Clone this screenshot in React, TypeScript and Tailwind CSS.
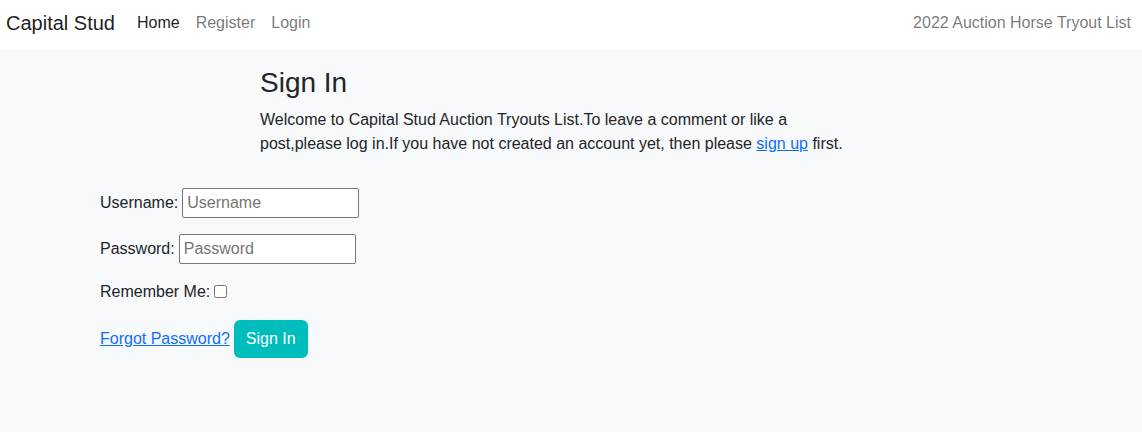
import React from "react";

const App: React.FC = () => {
    return (
        <div className="min-h-screen flex flex-col bg-[#f8f9fa] text-[#212529] font-['Liberation_Sans',Arial,sans-serif]">
            {/* Navbar */}
            <nav className="w-full h-[50px] bg-white flex items-center justify-between pl-[6px] pr-[11px] pb-[4px]">
                <div className="flex items-center">
                    <a href="#" className="text-[20px] text-black/90 mr-[22px]">Capital Stud</a>
                    <div className="flex items-center gap-4 text-[16px]">
                        <a href="#" className="text-black/90">Home</a>
                        <a href="#" className="text-black/55">Register</a>
                        <a href="#" className="text-black/55">Login</a>
                    </div>
                </div>
                <span className="text-[16px] text-black/55">2022 Auction Horse Tryout List</span>
            </nav>

            {/* Content */}
            <main className="flex-1 pl-[100px]">
                <div className="pl-[160px] pt-[16px]">
                    <h3 className="text-[28px] font-medium leading-[1.2] mb-2">Sign In</h3>
                    <p className="text-[16px] leading-6 w-[604px]">
                        Welcome to Capital Stud Auction Tryouts List.To leave a comment or like a post,please log
                        in.If you have not created an account yet, then please{" "}
                        <a href="#" className="text-[#0d6efd] underline">sign up</a> first.
                    </p>
                </div>

                <form className="mt-8 text-[16px] leading-6">
                    <p className="mb-4 flex items-center">
                        <label>Username:</label>
                        <input
                            type="text"
                            placeholder="Username"
                            className="ml-1 w-[177px] h-[30px] bg-white border border-[#767676] rounded-[2px] px-1 placeholder:text-[#757575] outline-none"
                        />
                    </p>
                    <p className="mb-4 flex items-center">
                        <label>Password:</label>
                        <input
                            type="password"
                            placeholder="Password"
                            className="ml-1 w-[177px] h-[30px] bg-white border border-[#767676] rounded-[2px] px-1 placeholder:text-[#757575] outline-none"
                        />
                    </p>
                    <p className="mb-4 flex items-center">
                        <label>Remember Me:</label>
                        <input type="checkbox" className="ml-1 w-[13px] h-[13px]" />
                    </p>
                    <div className="flex items-center">
                        <a href="#" className="text-[#0d6efd] underline">Forgot Password?</a>
                        <button
                            type="button"
                            className="ml-1 bg-[#00bdbd] text-white px-3 h-[38px] rounded-[6px] text-[16px]"
                        >
                            Sign In
                        </button>
                    </div>
                </form>
            </main>
        </div>
    );
};

export default App;
